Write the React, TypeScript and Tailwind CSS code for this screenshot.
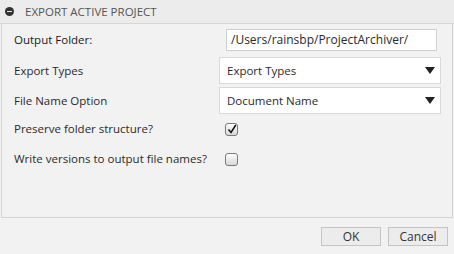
import React from "react";

const font = { fontFamily: '"Open Sans", "Noto Sans", sans-serif' };

function Arrow() {
  return (
    <svg width="10" height="8" viewBox="0 0 10 8" className="shrink-0">
      <path d="M0 0 L10 0 L5 7 Z" fill="#222" />
    </svg>
  );
}

function Checkbox({ checked }: { checked: boolean }) {
  return (
    <div className="w-[13px] h-[13px] rounded-[3px] border border-[#7a7a7a] bg-gradient-to-b from-[#fdfdfd] to-[#d8d8d8] flex items-center justify-center">
      {checked && (
        <svg width="10" height="10" viewBox="0 0 10 10">
          <path d="M1.5 5.5 L4 8.5 L8.8 1" stroke="#111" strokeWidth="1.5" fill="none" />
        </svg>
      )}
    </div>
  );
}

export default function App() {
  return (
    <div className="w-[454px] h-[254px] bg-[#f2f2f2] flex flex-col text-[11.5px] text-[#2a2a2a]" style={font}>
      <div className="h-[24px] bg-[#ececec] border-b border-[#d6d6d6] flex items-center pl-[5px] gap-[11px] shrink-0">
        <div className="w-[9px] h-[9px] rounded-full bg-[#333] flex items-center justify-center">
          <div className="w-[5px] h-[1.5px] bg-[#ececec]" />
        </div>
        <span className="text-[#555] text-[11.5px]">EXPORT ACTIVE PROJECT</span>
      </div>
      <div className="h-[194px] mx-[1px] border-x border-b border-[#d4d4d4] bg-[#f2f2f2] flex flex-col pl-[12px] pt-[5px]">
        <div className="flex items-center h-[22px]">
          <span className="w-[212px] font-medium text-[#1a1a1a]">Output Folder:</span>
          <div className="w-[211px] h-[22px] bg-white border border-[#cfcfcf] flex items-center pl-[4px] text-[12px]">
            /Users/rainsbp/ProjectArchiver/
          </div>
        </div>
        <div className="flex items-center h-[27px] mt-[6px]">
          <span className="w-[205px]">Export Types</span>
          <div className="w-[222px] h-[27px] bg-white border border-[#d9d9d9] flex items-center justify-between pl-[7px] pr-[5px]">
            <span>Export Types</span>
            <Arrow />
          </div>
        </div>
        <div className="flex items-center h-[27px] mt-[3px]">
          <span className="w-[205px]">File Name Option</span>
          <div className="w-[222px] h-[27px] bg-white border border-[#d9d9d9] flex items-center justify-between pl-[7px] pr-[5px]">
            <span>Document Name</span>
            <Arrow />
          </div>
        </div>
        <div className="flex items-center h-[20px] mt-[5px]">
          <span className="w-[211px]">Preserve folder structure?</span>
          <Checkbox checked />
        </div>
        <div className="flex items-center h-[20px] mt-[10px]">
          <span className="w-[211px]">Write versions to output file names?</span>
          <Checkbox checked={false} />
        </div>
      </div>
      <div className="flex justify-end gap-[7px] pr-[6px] pt-[9px]">
        <button className="w-[60px] h-[19px] bg-[#ececec] border border-[#c4c4c4] text-[#333] text-[12px] leading-none">OK</button>
        <button className="w-[60px] h-[19px] bg-[#ececec] border border-[#c4c4c4] text-[#333] text-[12px] leading-none">Cancel</button>
      </div>
    </div>
  );
}
